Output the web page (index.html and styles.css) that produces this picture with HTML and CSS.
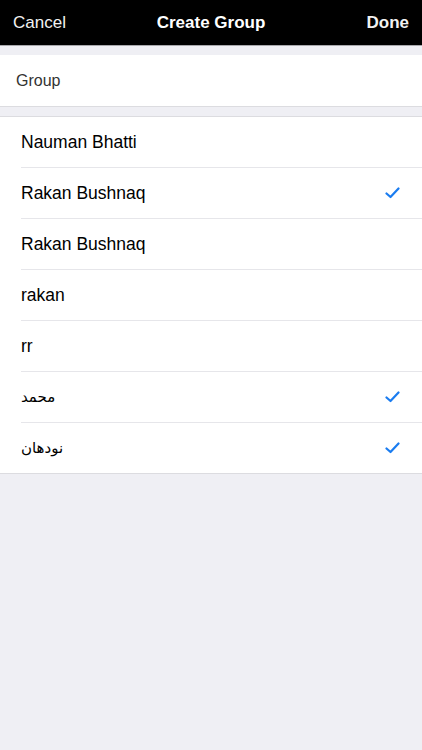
FILE: index.html
```html
<html>
  <head>
    <meta charset="utf-8">
    <link rel="stylesheet" href="styles.css">
  </head>
  <body>
    <div class="navbar">
      <span class="nav-btn">Cancel</span>
      <span class="nav-title">Create Group</span>
      <span class="nav-btn nav-done">Done</span>
    </div>

    <div class="section group-section">
      <div class="group-cell">Group</div>
    </div>

    <div class="section list">
      <div class="row"><span class="name">Nauman Bhatti</span></div>
      <div class="row"><span class="name">Rakan Bushnaq</span><svg class="check" width="15" height="12" viewBox="0 0 15 12"><path d="M1.5 6.5 L5.5 10 L13.5 1.5" fill="none" stroke="#1a7cf0" stroke-width="2.2" stroke-linecap="round" stroke-linejoin="round"/></svg></div>
      <div class="row"><span class="name">Rakan Bushnaq</span></div>
      <div class="row"><span class="name">rakan</span></div>
      <div class="row"><span class="name">rr</span></div>
      <div class="row"><span class="name arabic">محمد</span><svg class="check" width="15" height="12" viewBox="0 0 15 12"><path d="M1.5 6.5 L5.5 10 L13.5 1.5" fill="none" stroke="#1a7cf0" stroke-width="2.2" stroke-linecap="round" stroke-linejoin="round"/></svg></div>
      <div class="row"><span class="name arabic">نودهان</span><svg class="check" width="15" height="12" viewBox="0 0 15 12"><path d="M1.5 6.5 L5.5 10 L13.5 1.5" fill="none" stroke="#1a7cf0" stroke-width="2.2" stroke-linecap="round" stroke-linejoin="round"/></svg></div>
    </div>
  </body>
</html>
```

FILE: styles.css
```css
body {
  margin: 0;
  background-color: #efeff4;
  font-family: "Liberation Sans", "DejaVu Sans", sans-serif;
  height: 750px;
}

/* top bar */
.navbar {
  height: 45px;
  background-color: #000;
  border-bottom: 1px solid #a8a8ac;
  display: flex;
  align-items: center;
  justify-content: space-between;
  padding: 0 13px;
  color: #fff;
  font-size: 17px;
  position: relative;
}
.nav-btn {
  color: #f2f2f2;
}
.nav-done {
  font-weight: bold;
}
.nav-title {
  font-weight: bold;
  position: absolute;
  left: 0;
  right: 0;
  text-align: center;
  pointer-events: none;
}

.section {
  background-color: #fff;
  border-top: 1px solid #dcdce0;
  border-bottom: 1px solid #dcdce0;
}
.group-section {
  margin-top: 9px;
  border-top: none;
}
.group-cell {
  height: 51px;
  display: flex;
  align-items: center;
  padding-left: 16px;
  font-size: 16px;
  color: #333;
}

.list {
  margin-top: 9px;
  padding-left: 21px;
}
.row {
  height: 50px;
  display: flex;
  align-items: center;
  justify-content: space-between;
  padding-right: 22px;
  border-bottom: 1px solid #e6e6ea;
  font-size: 17.5px;
  color: #000;
}
.row:last-child {
  border-bottom: none;
}
.arabic {
  font-family: "DejaVu Sans", sans-serif;
  font-size: 15px;
}
.check {
  display: block;
}
```
